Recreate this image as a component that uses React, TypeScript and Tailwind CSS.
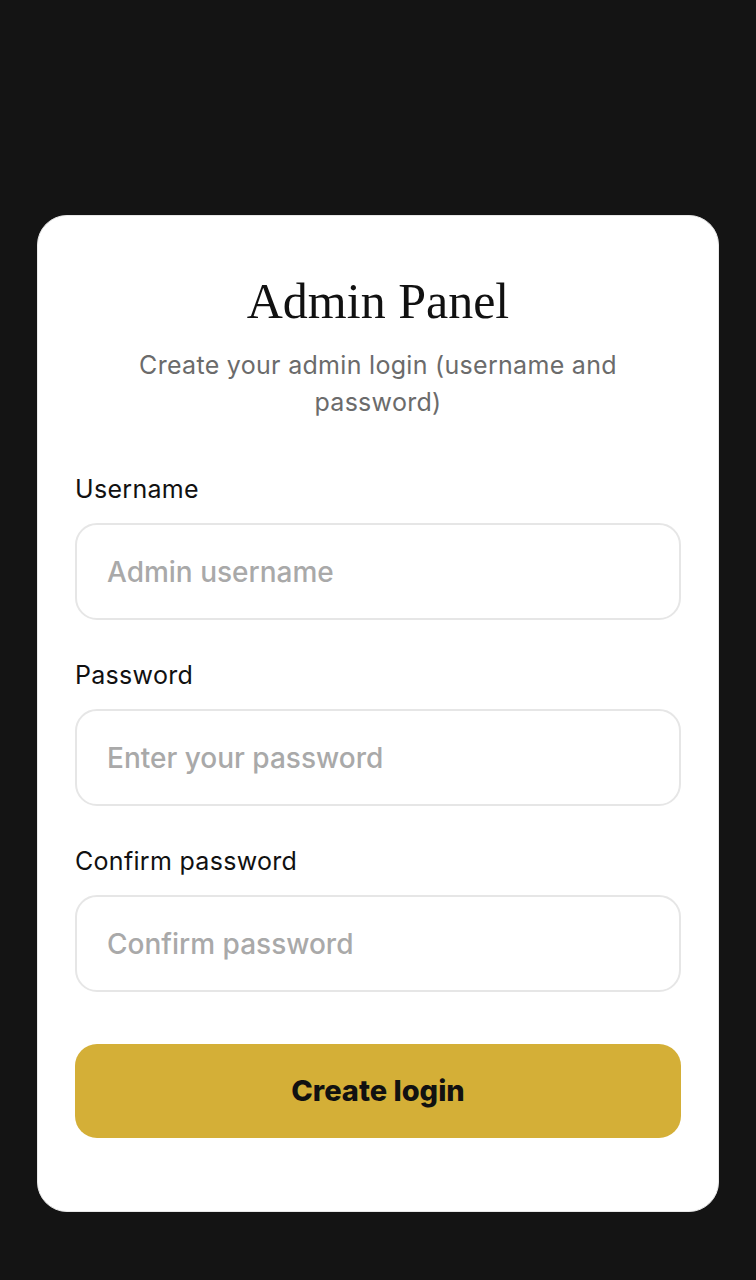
import React from "react";

function Field({ label, placeholder, type = "text" }: { label: string; placeholder: string; type?: string }) {
  return (
    <div className="flex flex-col">
      <label className="text-[25px] leading-[32px] tracking-[0.3px] text-[#111111]">{label}</label>
      <input
        type={type}
        placeholder={placeholder}
        className="mt-[18px] h-[97px] w-full rounded-[22px] border-2 border-[#e6e6e6] bg-white px-[30px] text-[28px] font-medium text-[#111] placeholder:text-[#a9a9a9] outline-none"
        style={{ fontFamily: "Inter, 'Liberation Sans', sans-serif" }}
      />
    </div>
  );
}

export default function App() {
  return (
    <div
      className="min-h-[1280px] w-full bg-[#141414] pt-[215px] px-[37px]"
      style={{ fontFamily: "Inter, 'Liberation Sans', sans-serif" }}
    >
      <div className="rounded-[30px] border border-[#e8e8e8] bg-white px-[37px] pt-[56px] pb-[73px]">
        <h1
          className="text-center text-[50px] leading-[58px] text-[#111]"
          style={{ fontFamily: "'Liberation Serif', 'DejaVu Serif', serif" }}
        >
          Admin Panel
        </h1>
        <p className="mx-auto mt-[17px] max-w-[520px] text-center text-[25px] leading-[37px] tracking-[0.3px] text-[#6b6b6b]">
          Create your admin login (username and password)
        </p>
        <div className="mt-[52px] flex flex-col gap-[39px]">
          <Field label="Username" placeholder="Admin username" />
          <Field label="Password" placeholder="Enter your password" type="password" />
          <Field label="Confirm password" placeholder="Confirm password" type="password" />
        </div>
        <button className="mt-[52px] h-[94px] w-full rounded-[22px] bg-[#d4af37] text-[29px] font-extrabold text-[#111]">
          Create login
        </button>
      </div>
    </div>
  );
}
